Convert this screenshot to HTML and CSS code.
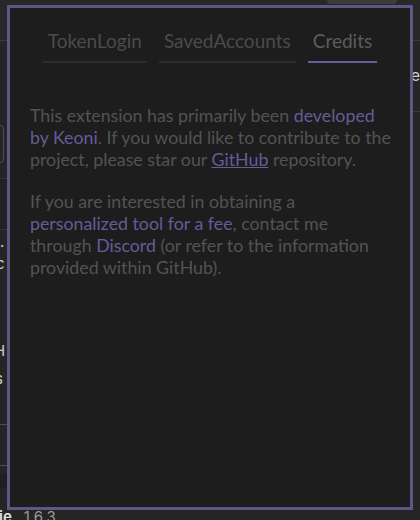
FILE: index.html
```html
<!DOCTYPE html>
<html>
<head>
<meta charset="utf-8">
<link rel="stylesheet" href="styles.css">
</head>
<body>
<div class="page">
  <div class="leftcol">
    <div class="topbar"><div class="pill"></div></div>
    <div class="spacer s1"></div>
    <div class="box"></div>
    <div class="sep"></div>
    <div class="txt t1">1.</div>
    <div class="txt t2">c</div>
    <div class="txt t3">H</div>
    <div class="txt t4">s</div>
    <div class="box2"></div>
    <div class="band"></div>
    <div class="ver"><span class="ie">ie</span><span class="v">1.6.3</span></div>
  </div>
  <div class="rightcol">
    <div class="rtop"></div>
    <div class="rfrag">e</div>
  </div>
</div>

<div class="popup">
  <nav class="tabs">
    <div class="tab">TokenLogin</div>
    <div class="tab">SavedAccounts</div>
    <div class="tab active">Credits</div>
  </nav>
  <div class="content">
    <p>This extension has primarily been <span class="hl">developed by Keoni</span>. If you would like to contribute to the project, please star our <a class="link" href="#">GitHub</a> repository.</p>
    <p>If you are interested in obtaining a <span class="hl">personalized tool for a fee</span>, contact me through <span class="hl">Discord</span> (or refer to the information provided within GitHub).</p>
  </div>
</div>
</body>
</html>
```

FILE: styles.css
```css
html, body {
  margin: 0;
  padding: 0;
}
body {
  width: 420px;
  height: 520px;
  overflow: hidden;
  background: #252525;
  font-family: "Inter", "Liberation Sans", sans-serif;
  position: relative;
}
.page {
  display: flex;
  height: 520px;
  color: #c8c8c8;
}
.leftcol {
  width: 410px;
  display: flex;
  flex-direction: column;
}
.rightcol {
  flex: 1;
  display: flex;
  flex-direction: column;
}
.topbar {
  height: 40px;
  border-bottom: 1px solid #3a3a3a;
  display: flex;
  justify-content: flex-end;
  background: #282828;
  flex: none;
}
.pill {
  width: 70px;
  height: 4px;
  margin-right: 10px;
  border-radius: 0 0 8px 8px;
  background: #3c3c3c;
}
.s1 { height: 84px; flex: none; }
.box {
  flex: none;
  width: 40px;
  height: 36px;
  margin-left: -38px;
  border: 1px solid #4e4e4e;
  border-radius: 4px;
}
.sep {
  flex: none;
  height: 50px;
  margin-top: 15px;
  background: #222;
  border-top: 1px solid #353535;
  border-bottom: 1px solid #353535;
}
.txt {
  flex: none;
  height: 20px;
  line-height: 20px;
  font-size: 15px;
  color: #cfcfcf;
}
.t1 { margin-top: 2px; margin-left: -6px; }
.t2 { margin-top: 2px; margin-left: -4px; }
.t3 { margin-top: 67px; margin-left: -6px; }
.t4 { margin-top: 8px; margin-left: -5px; }
.box2 {
  flex: none;
  width: 40px;
  height: 40px;
  margin-top: 35px;
  margin-left: -30px;
  border: 1px solid #4e4e4e;
  border-radius: 4px;
}
.band {
  flex: none;
  height: 14px;
  margin-top: 8px;
  width: 290px;
  background: #1f1f1f;
}
.ver {
  flex: none;
  height: 20px;
  width: 290px;
  margin-top: 19px;
  font-size: 15px;
  line-height: 20px;
  display: flex;
  gap: 12px;
  margin-left: -1px;
}
.ver .ie { color: #e2e2e2; font-weight: 600; }
.ver .v { color: #9a9a9a; }
.rtop {
  height: 40px;
  border-bottom: 1px solid #3a3a3a;
  background: #282828;
}
.rfrag {
  margin-top: 24px;
  height: 46px;
  font-size: 16px;
  line-height: 20px;
  padding-left: 4px;
  color: #cfcfcf;
  border-bottom: 1px solid #3a3a3a;
}

.popup {
  position: absolute;
  left: 7px;
  top: 5px;
  width: 406px;
  height: 505px;
  box-sizing: border-box;
  border: 3px solid #5f5687;
  background: #1d1d1d;
  font-family: "Lato", "Open Sans", sans-serif;
}
.tabs {
  display: flex;
  justify-content: center;
  gap: 12px;
  padding-top: 20px;
}
.tab {
  padding: 0 5px 8px;
  font-size: 19px;
  line-height: 25px;
  color: #4b4b4b;
  border-bottom: 2px solid #2d2d2d;
}
.tab.active {
  color: #5c5c5c;
  border-bottom-color: #675d99;
}
.content {
  padding: 41px 16px 0 20px;
  font-size: 17.8px;
  line-height: 22px;
  color: #535353;
}
.content p {
  margin: 0 0 20px;
}
.hl {
  color: #655c98;
}
.link {
  color: #655c98;
  text-decoration: underline;
}
```
